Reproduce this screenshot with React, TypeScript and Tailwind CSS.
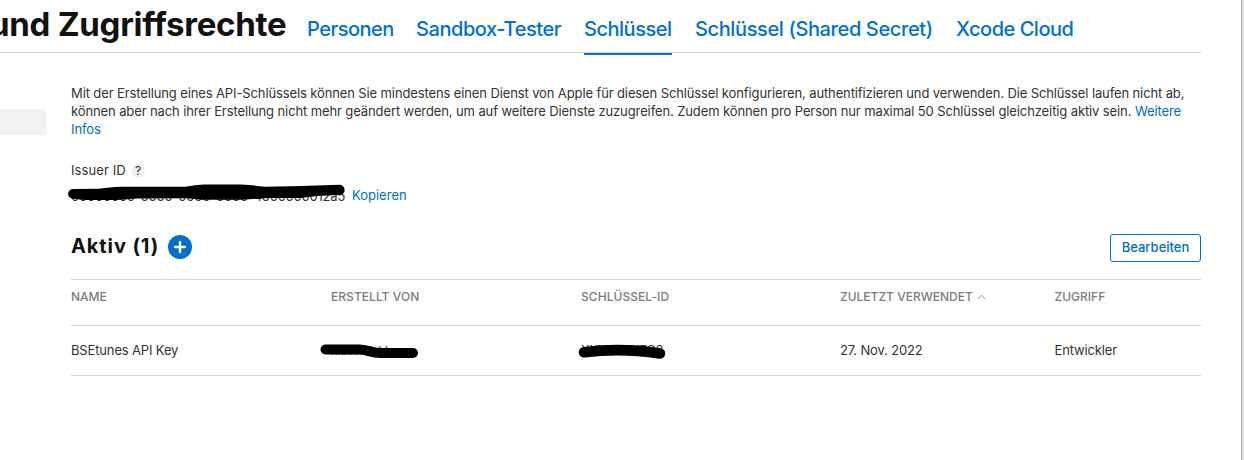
import React from "react";

const tabs = [
  { label: "Personen", box: "w-[86px]", tracking: "tracking-[-0.52px]" },
  { label: "Sandbox-Tester", box: "w-[145px]", tracking: "tracking-[-0.44px]" },
  { label: "Schlüssel", box: "w-[88px]", tracking: "tracking-[-0.48px]", active: true },
  { label: "Schlüssel (Shared Secret)", box: "w-[238px]", tracking: "tracking-[-0.38px]" },
  { label: "Xcode Cloud", box: "w-[117px]", tracking: "tracking-[-0.48px]" },
];

function PlusIcon() {
  return (
    <svg className="-mt-[3px]" width="24" height="24" viewBox="0 0 24 24" aria-hidden="true">
      <circle cx="12" cy="12" r="12" fill="#0070c9" />
      <path d="M12 7v10M7 12h10" stroke="#fff" strokeWidth="2.4" strokeLinecap="round" />
    </svg>
  );
}

function Chevron() {
  return (
    <svg width="9" height="6" viewBox="0 0 9 6" fill="none" aria-hidden="true">
      <path d="M0.8 5L4.5 1.2L8.2 5" stroke="#888" strokeWidth="0.9" />
    </svg>
  );
}

export default function App() {
  return (
    <div className="flex h-[460px] w-[1244px] overflow-hidden bg-white font-['Inter','Liberation_Sans',sans-serif] text-[13px] text-[#333]">
      <div className="w-[1201px] shrink-0">
        <header className="flex h-[53px] border-b border-[#d6d6d6]">
          <h1 className="h-[48px] w-[307px] shrink-0 text-[33px] leading-[49px] font-bold tracking-[-0.26px] whitespace-nowrap text-[#111]">
            <span className="-ml-[11px]">und Zugriffsrechte</span>
          </h1>
          <nav className="flex gap-[23px]">
            {tabs.map((t) => (
              <a
                key={t.label}
                className={`h-[55px] shrink-0 text-[20px] leading-[58px] font-medium whitespace-nowrap text-[#0070d2] ${t.tracking} ${t.box} ${t.active ? "border-b-2 border-[#0070d2]" : ""}`}
              >
                {t.label}
              </a>
            ))}
          </nav>
        </header>

        <div className="flex">
          <aside className="w-[71px] shrink-0 pt-[56px]">
            <div className="h-[26px] w-[47px] rounded-r-[4px] bg-[#f2f2f2]" />
          </aside>
          <main className="w-[1130px] pt-[31px]">
            <p className="h-[54px] leading-[18px] whitespace-nowrap">
              <span className="tracking-[-0.118px]">Mit der Erstellung eines API-Schlüssels können Sie mindestens einen Dienst von Apple für diesen Schlüssel konfigurieren, authentifizieren und verwenden. Die Schlüssel laufen nicht ab,</span>
              <br />
              <span className="tracking-[-0.11px]">können aber nach ihrer Erstellung nicht mehr geändert werden, um auf weitere Dienste zuzugreifen. Zudem können pro Person nur maximal 50 Schlüssel gleichzeitig aktiv sein. <a className="text-[#0070c9]">Weitere</a></span>
              <br />
              <a className="tracking-[-0.11px] text-[#0070c9]">Infos</a>
            </p>

            <div className="mt-[24px] flex h-[18px] items-center">
              <span className="w-[60px] tracking-[0.1px] whitespace-nowrap">Issuer ID</span>
              <span className="flex size-[14px] items-center justify-center rounded-full bg-[#f2f2f2] text-[12px] leading-none text-[#333]">?</span>
            </div>

            <div className="mt-[7px] flex h-[18px] items-center">
              <div className="relative w-[281px] leading-[18px] whitespace-nowrap">
                <span className="tracking-[-0.22px]">00000000-0000-0000-0000-4300000012a5</span>
                <svg className="absolute -top-[3px] -left-[4px]" width="282" height="20" viewBox="0 0 282 20" aria-hidden="true">
                  <path d="M6 5L32 4.8C40 4 46 2.8 54 2.8L118 2.8C128 1 134 0.5 144 0.5L174 0.5C184 0.6 190 2.2 198 2.8L235 2L272 0.8A5 5 0 0 1 273 11L250 12L234 14L202 14L175 15.8L135 15.8L120 14.3L70 14.6L50 16L18 16L6 14.8A4.9 4.9 0 0 1 6 5Z" />
                </svg>
              </div>
              <a className="text-[#0070c9]">Kopieren</a>
            </div>

            <div className="mt-[29px] flex h-[28px] items-center">
              <h2 className="-mt-[4px] w-[97px] text-[20px] leading-[24px] font-bold tracking-[0.9px] whitespace-nowrap text-[#111]">Aktiv (1)</h2>
              <PlusIcon />
              <button className="-mt-px ml-auto h-[28px] w-[91px] rounded-[3px] border border-[#0070c9] text-[13px] leading-[25px] font-medium text-[#0070c9]">Bearbeiten</button>
            </div>

            <div className="mt-[17px] grid h-[47px] grid-cols-[260px_250px_259px_214.5px_1fr] border-y border-[#d6d6d6] text-[12px] leading-[34px] font-medium whitespace-nowrap text-[#7c7c7c]">
              <span>NAME</span>
              <span className="tracking-[0.05px]">ERSTELLT VON</span>
              <span className="tracking-[0.05px]">SCHLÜSSEL-ID</span>
              <span className="flex">
                <span className="w-[137px]">ZULETZT VERWENDET</span>
                <span className="pt-[14px] leading-none"><Chevron /></span>
              </span>
              <span>ZUGRIFF</span>
            </div>
            <div className="grid h-[50px] grid-cols-[260px_250px_259px_214.5px_1fr] border-b border-[#d6d6d6] leading-[49px] tracking-[-0.15px] whitespace-nowrap">
              <span>BSEtunes API Key</span>
              <span className="relative">
                <span className="text-[12px]">xxxxxxlxklx</span>
                <svg className="absolute top-[16px] -left-[12px]" width="102" height="18" viewBox="0 0 102 18" aria-hidden="true">
                  <path d="M6.5 7.5L40 7.5C50 7.5 50 11 62 11L94 11" fill="none" stroke="#000" strokeWidth="10" strokeLinecap="round" />
                </svg>
              </span>
              <span className="relative">
                <span className="text-[12.5px]">XXXXXXX7G2</span>
                <svg className="absolute top-[17px] -left-[4px]" width="92" height="20" viewBox="0 0 92 20" aria-hidden="true">
                  <path d="M7 9.3C30 6.2 58 6.7 83 10.5" fill="none" stroke="#000" strokeWidth="10.6" strokeLinecap="round" />
                </svg>
              </span>
              <span>27. Nov. 2022</span>
              <span>Entwickler</span>
            </div>
          </main>
        </div>
      </div>
      <div className="ml-[40px] h-full w-[3px] border-l border-[#b0b0b0] bg-[#e4e4e4]" />
    </div>
  );
}
